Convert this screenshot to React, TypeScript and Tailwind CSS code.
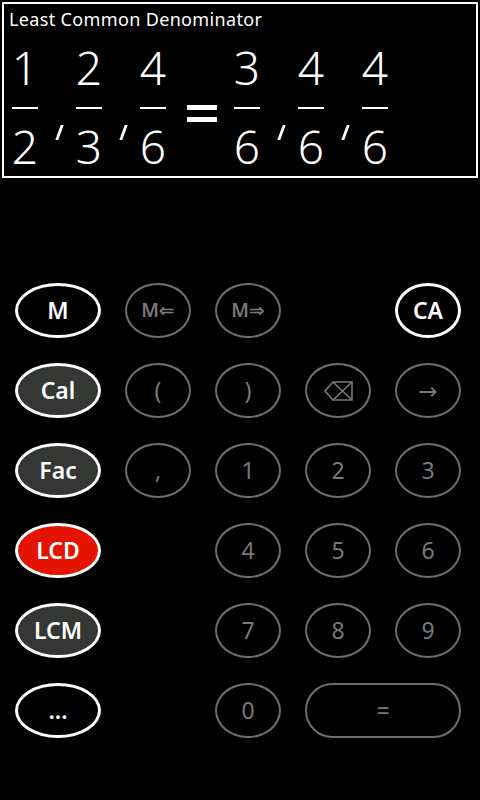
import React from 'react';

const font = { fontFamily: '"Noto Sans", "Open Sans", "DejaVu Sans", sans-serif' };

const Fraction: React.FC<{ num: string; den: string }> = ({ num, den }) => (
    <div className="flex flex-col items-center w-[26px]">
        <div className="h-[46px] text-[46px] leading-[46px] font-light text-white">{num}</div>
        <div className="mt-[17px] h-[2px] w-[26px] bg-white" />
        <div className="mt-[14px] h-[46px] text-[46px] leading-[46px] font-light text-white">{den}</div>
    </div>
);

const Sep: React.FC = () => (
    <div className="w-[38px] flex justify-center">
        <div className="mt-[81px] ml-[4px] h-[15px] w-[3px] bg-white skew-x-[-20deg]" />
    </div>
);

const Equals: React.FC = () => (
    <div className="ml-[21px] mr-[17px] w-[30px] flex flex-col gap-[7px] pt-[61px]">
        <div className="h-[5px] bg-white" />
        <div className="h-[5px] bg-white" />
    </div>
);

type Kind = 'white' | 'dark' | 'red' | 'gray' | 'empty';

const Key: React.FC<{ kind: Kind; wide?: boolean; small?: boolean; children?: React.ReactNode; big?: boolean }> = ({ kind, wide, small, children, big }) => {
    if (kind === 'empty') return <div className="w-[66px] h-[55px]" />;
    if (kind === 'gray') {
        return (
            <button className={`${wide ? 'w-[156px] rounded-full' : 'w-[66px] rounded-[50%]'} h-[55px] border-2 border-[#6e6e6e] text-[#787878] flex items-center justify-center ${big ? 'text-[23px]' : 'text-[19px] font-semibold'}`}>
                {children}
            </button>
        );
    }
    const fill = kind === 'dark' ? 'bg-[#343734]' : kind === 'red' ? 'bg-[#e51400]' : 'bg-black';
    return (
        <button className={`${small ? 'w-[66px]' : 'w-[86px]'} h-[55px] rounded-[50%] border-[3px] border-white ${fill} text-white text-[23px] font-semibold flex items-center justify-center`}>
            {children}
        </button>
    );
};

const Backspace: React.FC = () => (
    <svg width="29" height="20" viewBox="0 0 29 20" fill="none" stroke="#787878" strokeWidth="1.6">
        <path d="M1 10 L9 1 H28 V19 H9 Z" />
        <path d="M9 1 L28 19 M28 1 L9 19" />
    </svg>
);

export default function App() {
    return (
        <div className="w-[480px] h-[800px] bg-black overflow-hidden" style={font}>
            <div className="m-[2px] h-[176px] border-2 border-white pl-[5px] pt-[3px]">
                <div className="text-[18px] leading-[24px] tracking-[0.35px] text-white">Least Common Denominator</div>
                <div className="flex ml-[3px] mt-[13px]">
                    <Fraction num="1" den="2" />
                    <Sep />
                    <Fraction num="2" den="3" />
                    <Sep />
                    <Fraction num="4" den="6" />
                    <Equals />
                    <Fraction num="3" den="6" />
                    <Sep />
                    <Fraction num="4" den="6" />
                    <Sep />
                    <Fraction num="4" den="6" />
                </div>
            </div>

            <div className="mt-[105px] pl-[15px] flex flex-col gap-[25px]">
                <div className="flex gap-[24px]">
                    <Key kind="white">M</Key>
                    <Key kind="gray">M⇐</Key>
                    <Key kind="gray">M⇒</Key>
                    <Key kind="empty" />
                    <Key kind="white" small>CA</Key>
                </div>
                <div className="flex gap-[24px]">
                    <Key kind="dark">Cal</Key>
                    <Key kind="gray" big>(</Key>
                    <Key kind="gray" big>)</Key>
                    <Key kind="gray"><Backspace /></Key>
                    <Key kind="gray" big>→</Key>
                </div>
                <div className="flex gap-[24px]">
                    <Key kind="dark">Fac</Key>
                    <Key kind="gray" big>,</Key>
                    <Key kind="gray" big>1</Key>
                    <Key kind="gray" big>2</Key>
                    <Key kind="gray" big>3</Key>
                </div>
                <div className="flex gap-[24px]">
                    <Key kind="red">LCD</Key>
                    <Key kind="empty" />
                    <Key kind="gray" big>4</Key>
                    <Key kind="gray" big>5</Key>
                    <Key kind="gray" big>6</Key>
                </div>
                <div className="flex gap-[24px]">
                    <Key kind="dark">LCM</Key>
                    <Key kind="empty" />
                    <Key kind="gray" big>7</Key>
                    <Key kind="gray" big>8</Key>
                    <Key kind="gray" big>9</Key>
                </div>
                <div className="flex gap-[24px]">
                    <Key kind="white">...</Key>
                    <Key kind="empty" />
                    <Key kind="gray" big>0</Key>
                    <Key kind="gray" wide big>=</Key>
                </div>
            </div>
        </div>
    );
}
